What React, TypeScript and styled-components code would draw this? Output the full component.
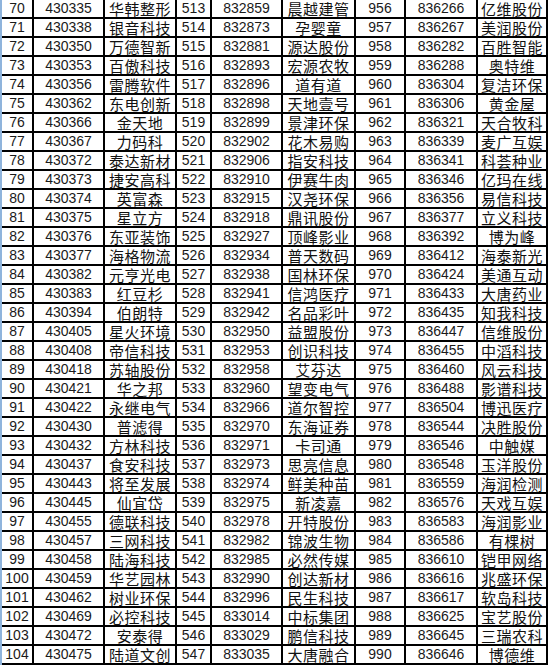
import styled, { createGlobalStyle } from "styled-components";

const GlobalStyle = createGlobalStyle`
  html, body {
    margin: 0;
    padding: 0;
    background: #ffffff;
  }
`;

// 每行: 序号, 代码, 名称 (三组)
const rows: string[] = [
  "70 430335 华韩整形 513 832859 晨越建管 956 836266 亿维股份",
  "71 430338 银音科技 514 832873 孕婴童 957 836267 美润股份",
  "72 430350 万德智新 515 832881 源达股份 958 836282 百胜智能",
  "73 430353 百傲科技 516 832893 宏源农牧 959 836288 奥特维",
  "74 430356 雷腾软件 517 832896 道有道 960 836304 复洁环保",
  "75 430362 东电创新 518 832898 天地壹号 961 836306 黄金屋",
  "76 430366 金天地 519 832899 景津环保 962 836321 天合牧科",
  "77 430367 力码科 520 832902 花木易购 963 836339 麦广互娱",
  "78 430372 泰达新材 521 832906 指安科技 964 836341 科荟种业",
  "79 430373 捷安高科 522 832910 伊赛牛肉 965 836346 亿玛在线",
  "80 430374 英富森 523 832915 汉尧环保 966 836356 易信科技",
  "81 430375 星立方 524 832918 鼎讯股份 967 836377 立义科技",
  "82 430376 东亚装饰 525 832927 顶峰影业 968 836392 博为峰",
  "83 430377 海格物流 526 832934 普天数码 969 836412 海泰新光",
  "84 430382 元亨光电 527 832938 国林环保 970 836424 美通互动",
  "85 430383 红豆杉 528 832941 信鸿医疗 971 836433 大唐药业",
  "86 430394 伯朗特 529 832942 名品彩叶 972 836435 知我科技",
  "87 430405 星火环境 530 832950 益盟股份 973 836447 信维股份",
  "88 430408 帝信科技 531 832953 创识科技 974 836455 中滔科技",
  "89 430418 苏轴股份 532 832958 艾芬达 975 836460 风云科技",
  "90 430421 华之邦 533 832960 望变电气 976 836488 影谱科技",
  "91 430422 永继电气 534 832966 道尔智控 977 836504 博迅医疗",
  "92 430430 普滤得 535 832970 东海证券 978 836544 决胜股份",
  "93 430432 方林科技 536 832971 卡司通 979 836546 中触媒",
  "94 430437 食安科技 537 832973 思亮信息 980 836548 玉洋股份",
  "95 430443 将至发展 538 832974 鲜美种苗 981 836559 海润检测",
  "96 430445 仙宜岱 539 832975 新凌嘉 982 836576 天戏互娱",
  "97 430455 德联科技 540 832978 开特股份 983 836583 海润影业",
  "98 430457 三网科技 541 832982 锦波生物 984 836586 有棵树",
  "99 430458 陆海科技 542 832985 必然传媒 985 836610 铠甲网络",
  "100 430459 华艺园林 543 832990 创达新材 986 836616 兆盛环保",
  "101 430462 树业环保 544 832996 民生科技 987 836617 软岛科技",
  "102 430469 必控科技 545 833014 中标集团 988 836625 宝艺股份",
  "103 430472 安泰得 546 833029 鹏信科技 989 836645 三瑞农科",
  "104 430475 陆道文创 547 833035 大唐融合 990 836646 博德维",
];

const Sheet = styled.div`
  display: grid;
  grid-template-columns: 30px 69px 70px 33px 69px 71px 48px 70px 68px;
  grid-auto-rows: 17px;
  gap: 2px;
  width: max-content;
  background: #000000;
  border-left: 2px solid #8fb4dc;
  padding: 0 2px 2px 0;
`;

const Cell = styled.div<{ $name?: boolean }>`
  background: #ffffff;
  display: flex;
  align-items: center;
  justify-content: center;
  white-space: nowrap;
  color: ${(p) => (p.$name ? "#111111" : "#1a1a1a")};
  font-family: ${(p) =>
    p.$name
      ? `"Noto Sans CJK SC", sans-serif`
      : `"Liberation Sans", "DejaVu Sans", sans-serif`};
  font-size: ${(p) => (p.$name ? "15px" : "14px")};
  letter-spacing: ${(p) => (p.$name ? "0.5px" : "0")};
  line-height: 17px;
`;

const App = () => {
  return (
    <>
      <GlobalStyle />
      <Sheet>
        {rows.map((r) =>
          r.split(" ").map((v, i) => (
            <Cell key={r + i} $name={i % 3 === 2}>
              {v}
            </Cell>
          ))
        )}
      </Sheet>
    </>
  );
};

export default App;
